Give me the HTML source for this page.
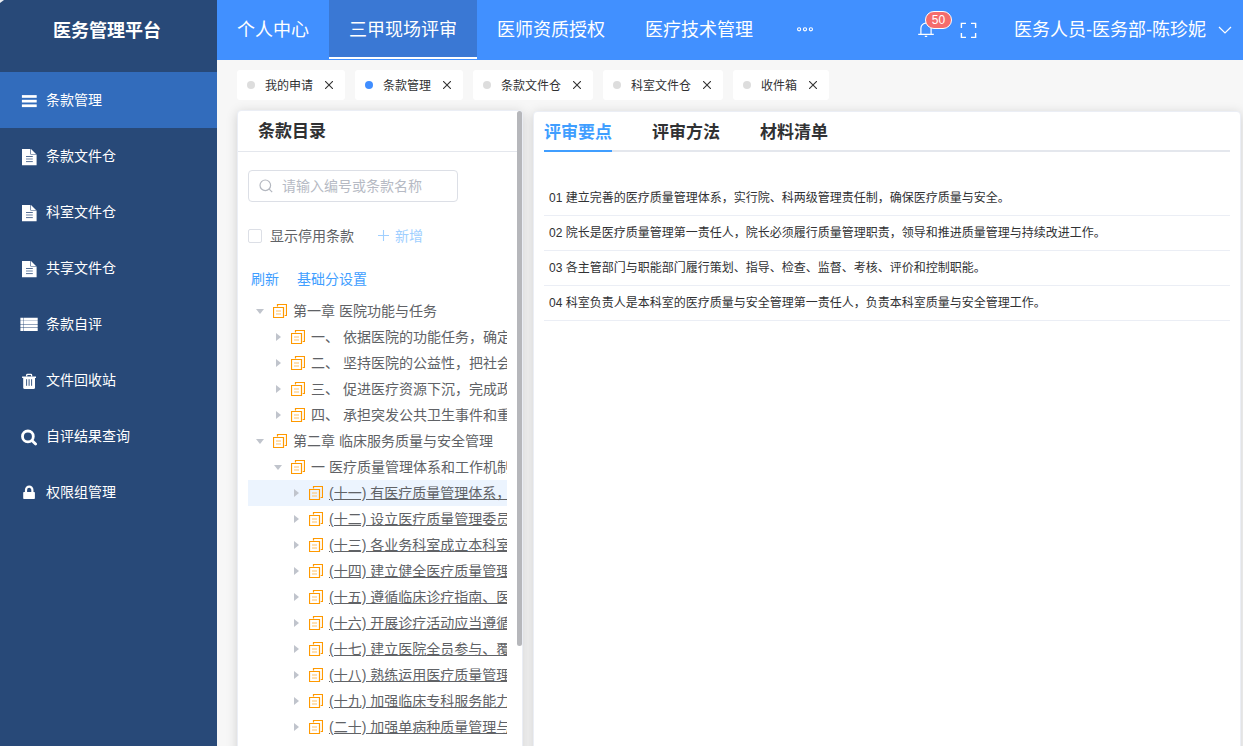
<!DOCTYPE html>
<html lang="zh-CN">
<head>
<meta charset="utf-8">
<title>医务管理平台</title>
<style>
*{box-sizing:border-box;margin:0;padding:0}
html,body{width:1243px;height:746px;overflow:hidden;background:#f7f7f7;
  font-family:"Liberation Sans","Noto Sans CJK SC",sans-serif;color:#303133;}
body{position:relative}
svg{display:block}

/* ---------- sidebar ---------- */
#side{position:absolute;left:0;top:0;width:217px;height:746px;background:#284978;color:#fff}
#logo{position:absolute;left:0;top:2px;width:214px;height:60px;line-height:59px;text-align:center;
  font-size:18px;font-weight:700;letter-spacing:0}
#menu{position:absolute;left:0;top:72px;width:217px;list-style:none}
#menu li{position:relative;height:56px;line-height:56px;font-size:14px;padding-left:46px;white-space:nowrap}
#menu li.on{background:#326cbc}
#menu li svg{position:absolute;left:20px;top:20px;width:18px;height:18px;fill:#fff}

/* ---------- top bar ---------- */
#top{position:absolute;left:217px;top:0;width:1026px;height:60px;background:#4190ff;color:#fff}
#nav{position:absolute;left:0;top:0;height:59px;list-style:none;display:flex}
#nav li{height:59px;line-height:60px;padding:0 20px;font-size:18px;white-space:nowrap;position:relative}
#nav li.on{background:#3a78d4}
#nav li.on:after{content:"";position:absolute;left:0;right:0;bottom:0;height:2px;background:#fff}
#user{position:absolute;left:797px;top:0;height:60px;line-height:60px;font-size:18px;white-space:nowrap}
.abs{position:absolute}

/* ---------- tags ---------- */
#tags{position:absolute;left:237px;top:70px;height:30px;display:flex;list-style:none}
#tags li{position:relative;height:30px;line-height:32px;background:#fff;border-radius:3px;margin-right:10px;
  font-size:12px;color:#303133;padding:0 32px 0 28px;white-space:nowrap}
#tags li:before{content:"";position:absolute;left:10px;top:11px;width:8px;height:8px;border-radius:50%;background:#ddd}
#tags li.on:before{background:#408eff}
#tags li svg{position:absolute;right:12px;top:11px;width:8px;height:8px;stroke:#333;stroke-width:1.1;fill:none}

/* ---------- left card ---------- */
.card{position:absolute;background:#fff;border:1px solid #ebeef5;border-radius:4px;
  box-shadow:0 2px 12px 0 rgba(0,0,0,.16)}
#lcard{left:237px;top:110px;width:286px;height:660px}
#lhead{position:absolute;left:0;top:0;width:279px;height:41px;border-bottom:1px solid #e4e7ed;
  font-size:17px;font-weight:700;line-height:41px;padding-left:20px;color:#303133}
#thumb{position:absolute;left:279px;top:0;width:5px;height:535px;background:#b6b7bb;border-radius:3px}
#search{position:absolute;left:10px;top:59px;width:210px;height:32px;border:1px solid #dcdfe6;border-radius:4px;
  font-size:14px;line-height:30px;color:#b6bac4;padding-left:33px;white-space:nowrap}
#search svg{position:absolute;left:10px;top:8px;width:14px;height:14px;stroke:#b4b8c0;fill:none;stroke-width:1.2}
#chk{position:absolute;left:10px;top:118px;width:14px;height:14px;border:1px solid #dcdfe6;border-radius:2px;background:#fff}
#chklab{position:absolute;left:32px;top:114px;font-size:14px;line-height:22px;color:#606266;white-space:nowrap}
#add{position:absolute;left:139px;top:114px;font-size:14px;line-height:22px;color:#a0cfff;white-space:nowrap;padding-left:18px}
#add svg{position:absolute;left:1px;top:5px;width:11px;height:11px;stroke:#a0cfff;stroke-width:1.1;fill:none}
#links{position:absolute;left:13px;top:157px;font-size:14px;line-height:22px;color:#409eff;white-space:nowrap}
#links span{margin-right:18px}
#tree{position:absolute;left:10px;top:187px;width:259px;overflow:hidden;list-style:none}
#tree li{position:relative;height:26px;line-height:26px;font-size:14px;color:#606266;white-space:nowrap;overflow:hidden}
#tree li.cur{background:#ecf4fe}
#tree li u{text-decoration:underline;text-underline-offset:1px}
#tree li .ar{position:absolute;top:8px;width:10px;height:10px;fill:#c0c4cc}
#tree li .ic{position:absolute;top:6px;width:14px;height:14px;stroke:#ff9900;fill:none;stroke-width:1.2}
#tree li .ic .in{stroke:#ffc266;stroke-width:1.2}
.l1{padding-left:45px}.l1 .ar{left:7px}.l1 .ic{left:25px}
.l2{padding-left:63px}.l2 .ar{left:25px}.l2 .ic{left:43px}
.l3{padding-left:81px}.l3 .ar{left:43px}.l3 .ic{left:61px}

/* ---------- right card ---------- */
#rcard{left:533px;top:111px;width:708px;height:660px}
#rtabs{position:absolute;left:10px;top:0;width:686px;height:40px;border-bottom:2px solid #e4e7ed;list-style:none;display:flex}
#rtabs li{height:38px;line-height:42px;font-size:17px;font-weight:700;color:#303133;margin-right:40px;position:relative;white-space:nowrap}
#rtabs li.on{color:#409eff}
#rtabs li.on:after{content:"";position:absolute;left:0;right:0;bottom:-2px;height:2px;background:#409eff}
#rlist{position:absolute;left:10px;top:69px;width:686px;list-style:none}
#rlist li{height:35px;line-height:34px;border-bottom:1px solid #ebeef5;font-size:12px;color:#303133;padding-left:5px;white-space:nowrap}
</style>
</head>
<body>

<div id="side">
  <div style="position:absolute;left:0;top:0;width:0;height:0;border-top:3px solid #fff;border-right:4px solid transparent;opacity:.9"></div>
  <div id="logo">医务管理平台</div>
  <ul id="menu">
    <li class="on"><svg viewBox="0 0 18 18"><rect x="1.900" y="3.100" width="14.800" height="2.700"/><rect x="1.900" y="7.800" width="14.800" height="2.700"/><rect x="1.900" y="12.400" width="14.800" height="2.700"/></svg>条款管理</li>
    <li><svg viewBox="0 0 18 18"><path d="M2 1h8.400v5.600h6.200v10.700H2z"/><path d="M11 1l5 5h-5z"/><path d="M6 8.500h6.800M6 13.600h6.800" stroke="#284978" stroke-width=".8"/><path d="M6 11h6.800" stroke="#284978" stroke-opacity=".45" stroke-width="1.500"/></svg>条款文件仓</li>
    <li><svg viewBox="0 0 18 18"><path d="M2 1h8.400v5.600h6.200v10.700H2z"/><path d="M11 1l5 5h-5z"/><path d="M6 8.500h6.800M6 13.600h6.800" stroke="#284978" stroke-width=".8"/><path d="M6 11h6.800" stroke="#284978" stroke-opacity=".45" stroke-width="1.500"/></svg>科室文件仓</li>
    <li><svg viewBox="0 0 18 18"><path d="M2 1h8.400v5.600h6.200v10.700H2z"/><path d="M11 1l5 5h-5z"/><path d="M6 8.500h6.800M6 13.600h6.800" stroke="#284978" stroke-width=".8"/><path d="M6 11h6.800" stroke="#284978" stroke-opacity=".45" stroke-width="1.500"/></svg>共享文件仓</li>
    <li><svg viewBox="0 0 18 18"><path d="M.4 1.700h3v3h-3zM3.800 1.700h13.900v3H3.800zM.4 5.100h3v3h-3zM3.800 5.100h13.900v3H3.800zM.4 8.500h3v3h-3zM3.800 8.500h13.900v3H3.800zM.4 11.900h3V15h-3zM3.800 11.900h13.900V15H3.800z"/></svg>条款自评</li>
    <li><svg viewBox="0 0 18 18"><path d="M2.100 4.500H16V6H2.100z"/><path d="M6.700 4.600V3.200a.8.800 0 0 1 .8-.8h3.300a.8.800 0 0 1 .8.800v1.400" fill="none" stroke="#fff" stroke-width="1.300"/><path d="M3.200 6H15v9.400a1.500 1.500 0 0 1-1.500 1.500H4.700a1.500 1.500 0 0 1-1.500-1.500z"/><path d="M6.600 7.200v6.600M9.100 7.200v6.600M11.600 7.200v6.600" stroke="#284978" stroke-width=".9"/></svg>文件回收站</li>
    <li><svg viewBox="0 0 18 18"><circle cx="7.900" cy="8.400" r="5.400" fill="none" stroke="#fff" stroke-width="2.800"/><path d="M11.900 12.400l3.700 3.700" stroke="#fff" stroke-width="2.800" stroke-linecap="round"/></svg>自评结果查询</li>
    <li><svg viewBox="0 0 18 18"><rect x="3.200" y="7.900" width="11.700" height="7.100" rx=".8"/><path d="M6 8.500V5.900a3.200 3.200 0 0 1 6.400 0v2.600" fill="none" stroke="#fff" stroke-width="2.200"/></svg>权限组管理</li>
  </ul>
</div>

<div id="top">
  <ul id="nav">
    <li>个人中心</li><li class="on">三甲现场评审</li><li>医师资质授权</li><li>医疗技术管理</li>
    <li><svg style="margin-top:25px" width="24" height="9" viewBox="0 0 24 9" fill="none" stroke="#fff" stroke-width="1.100"><circle cx="6.100" cy="4.300" r="1.600"/><circle cx="12" cy="4.300" r="1.600"/><circle cx="17.900" cy="4.300" r="1.600"/></svg></li>
  </ul>
  <svg class="abs" style="left:700px;top:21px" width="18" height="17" viewBox="0 0 18 17" fill="none" stroke="#fff" stroke-width="1.200"><path d="M3.900 12.700V7.300a5.100 5.100 0 0 1 10.200 0v5.400M1.200 13.300h15.600M9 1.200v1M7.800 15.300h2.400"/></svg>
  <div class="abs" style="left:708px;top:11px;width:27px;height:18px;border-radius:10px;background:#f56c6c;border:1px solid #fff;color:#fff;font-size:12px;line-height:16px;text-align:center">50</div>
  <svg class="abs" style="left:743px;top:22px" width="18" height="18" viewBox="0 0 18 18" fill="none" stroke="#fff" stroke-width="1.400"><path d="M1.400 6V1.400H6M11 1.400h4.600V6M15.600 11v4.400H11M6 15.400H1.400V11"/></svg>
  <div id="user">医务人员-医务部-陈珍妮</div>
  <svg class="abs" style="left:1001px;top:26px" width="14" height="9" viewBox="0 0 14 9" fill="none" stroke="#fff" stroke-width="1.200"><path d="M1 1l6 6 6-6"/></svg>
</div>

<ul id="tags">
  <li>我的申请<svg viewBox="0 0 8 8"><path d="M0 0l8 8M8 0L0 8"/></svg></li>
  <li class="on">条款管理<svg viewBox="0 0 8 8"><path d="M0 0l8 8M8 0L0 8"/></svg></li>
  <li>条款文件仓<svg viewBox="0 0 8 8"><path d="M0 0l8 8M8 0L0 8"/></svg></li>
  <li>科室文件仓<svg viewBox="0 0 8 8"><path d="M0 0l8 8M8 0L0 8"/></svg></li>
  <li>收件箱<svg viewBox="0 0 8 8"><path d="M0 0l8 8M8 0L0 8"/></svg></li>
</ul>

<div class="card" id="lcard">
  <div id="lhead">条款目录</div>
  <div id="thumb"></div>
  <div id="search"><svg viewBox="0 0 14 14"><circle cx="6.300" cy="6.300" r="5.300"/><path d="M10.200 10.200l3 3"/></svg>请输入编号或条款名称</div>
  <div id="chk"></div><div id="chklab">显示停用条款</div>
  <div id="add"><svg viewBox="0 0 11 11"><path d="M5.500 0v11M0 5.500h11"/></svg>新增</div>
  <div id="links"><span>刷新</span><span>基础分设置</span></div>
  <ul id="tree">
    <li class="l1"><svg class="ar" viewBox="0 0 10 10"><path d="M1 3h8L5 8z"/></svg><svg class="ic" viewBox="0 0 14 14"><path d="M.5 3.500h10v10H.5zM4.500 2.500V.5h9v11h-1.800"/><path class="in" d="M3 7h5M3 10h5"/></svg>第一章 医院功能与任务</li>
    <li class="l2"><svg class="ar" viewBox="0 0 10 10"><path d="M3 1v8l5-4z"/></svg><svg class="ic" viewBox="0 0 14 14"><path d="M.5 3.500h10v10H.5zM4.500 2.500V.5h9v11h-1.800"/><path class="in" d="M3 7h5M3 10h5"/></svg>一、 依据医院的功能任务，确定医院的发展目标</li>
    <li class="l2"><svg class="ar" viewBox="0 0 10 10"><path d="M3 1v8l5-4z"/></svg><svg class="ic" viewBox="0 0 14 14"><path d="M.5 3.500h10v10H.5zM4.500 2.500V.5h9v11h-1.800"/><path class="in" d="M3 7h5M3 10h5"/></svg>二、 坚持医院的公益性，把社会效益放在首位</li>
    <li class="l2"><svg class="ar" viewBox="0 0 10 10"><path d="M3 1v8l5-4z"/></svg><svg class="ic" viewBox="0 0 14 14"><path d="M.5 3.500h10v10H.5zM4.500 2.500V.5h9v11h-1.800"/><path class="in" d="M3 7h5M3 10h5"/></svg>三、 促进医疗资源下沉，完成政府指令性任务</li>
    <li class="l2"><svg class="ar" viewBox="0 0 10 10"><path d="M3 1v8l5-4z"/></svg><svg class="ic" viewBox="0 0 14 14"><path d="M.5 3.500h10v10H.5zM4.500 2.500V.5h9v11h-1.800"/><path class="in" d="M3 7h5M3 10h5"/></svg>四、 承担突发公共卫生事件和重大事故灾害</li>
    <li class="l1"><svg class="ar" viewBox="0 0 10 10"><path d="M1 3h8L5 8z"/></svg><svg class="ic" viewBox="0 0 14 14"><path d="M.5 3.500h10v10H.5zM4.500 2.500V.5h9v11h-1.800"/><path class="in" d="M3 7h5M3 10h5"/></svg>第二章 临床服务质量与安全管理</li>
    <li class="l2"><svg class="ar" viewBox="0 0 10 10"><path d="M1 3h8L5 8z"/></svg><svg class="ic" viewBox="0 0 14 14"><path d="M.5 3.500h10v10H.5zM4.500 2.500V.5h9v11h-1.800"/><path class="in" d="M3 7h5M3 10h5"/></svg>一 医疗质量管理体系和工作机制</li>
    <li class="l3 cur"><svg class="ar" viewBox="0 0 10 10"><path d="M3 1v8l5-4z"/></svg><svg class="ic" viewBox="0 0 14 14"><path d="M.5 3.500h10v10H.5zM4.500 2.500V.5h9v11h-1.800"/><path class="in" d="M3 7h5M3 10h5"/></svg><u>(十一) 有医疗质量管理体系，实行院科两级</u></li>
    <li class="l3"><svg class="ar" viewBox="0 0 10 10"><path d="M3 1v8l5-4z"/></svg><svg class="ic" viewBox="0 0 14 14"><path d="M.5 3.500h10v10H.5zM4.500 2.500V.5h9v11h-1.800"/><path class="in" d="M3 7h5M3 10h5"/></svg><u>(十二) 设立医疗质量管理委员会，人员组成</u></li>
    <li class="l3"><svg class="ar" viewBox="0 0 10 10"><path d="M3 1v8l5-4z"/></svg><svg class="ic" viewBox="0 0 14 14"><path d="M.5 3.500h10v10H.5zM4.500 2.500V.5h9v11h-1.800"/><path class="in" d="M3 7h5M3 10h5"/></svg><u>(十三) 各业务科室成立本科室医疗质量管理</u></li>
    <li class="l3"><svg class="ar" viewBox="0 0 10 10"><path d="M3 1v8l5-4z"/></svg><svg class="ic" viewBox="0 0 14 14"><path d="M.5 3.500h10v10H.5zM4.500 2.500V.5h9v11h-1.800"/><path class="in" d="M3 7h5M3 10h5"/></svg><u>(十四) 建立健全医疗质量管理人员的培训</u></li>
    <li class="l3"><svg class="ar" viewBox="0 0 10 10"><path d="M3 1v8l5-4z"/></svg><svg class="ic" viewBox="0 0 14 14"><path d="M.5 3.500h10v10H.5zM4.500 2.500V.5h9v11h-1.800"/><path class="in" d="M3 7h5M3 10h5"/></svg><u>(十五) 遵循临床诊疗指南、医疗技术操作规范</u></li>
    <li class="l3"><svg class="ar" viewBox="0 0 10 10"><path d="M3 1v8l5-4z"/></svg><svg class="ic" viewBox="0 0 14 14"><path d="M.5 3.500h10v10H.5zM4.500 2.500V.5h9v11h-1.800"/><path class="in" d="M3 7h5M3 10h5"/></svg><u>(十六) 开展诊疗活动应当遵循患者知情同意</u></li>
    <li class="l3"><svg class="ar" viewBox="0 0 10 10"><path d="M3 1v8l5-4z"/></svg><svg class="ic" viewBox="0 0 14 14"><path d="M.5 3.500h10v10H.5zM4.500 2.500V.5h9v11h-1.800"/><path class="in" d="M3 7h5M3 10h5"/></svg><u>(十七) 建立医院全员参与、覆盖临床诊疗</u></li>
    <li class="l3"><svg class="ar" viewBox="0 0 10 10"><path d="M3 1v8l5-4z"/></svg><svg class="ic" viewBox="0 0 14 14"><path d="M.5 3.500h10v10H.5zM4.500 2.500V.5h9v11h-1.800"/><path class="in" d="M3 7h5M3 10h5"/></svg><u>(十八) 熟练运用医疗质量管理工具开展</u></li>
    <li class="l3"><svg class="ar" viewBox="0 0 10 10"><path d="M3 1v8l5-4z"/></svg><svg class="ic" viewBox="0 0 14 14"><path d="M.5 3.500h10v10H.5zM4.500 2.500V.5h9v11h-1.800"/><path class="in" d="M3 7h5M3 10h5"/></svg><u>(十九) 加强临床专科服务能力建设</u></li>
    <li class="l3"><svg class="ar" viewBox="0 0 10 10"><path d="M3 1v8l5-4z"/></svg><svg class="ic" viewBox="0 0 14 14"><path d="M.5 3.500h10v10H.5zM4.500 2.500V.5h9v11h-1.800"/><path class="in" d="M3 7h5M3 10h5"/></svg><u>(二十) 加强单病种质量管理与控制工作</u></li>
  </ul>
</div>

<div class="card" id="rcard">
  <ul id="rtabs"><li class="on">评审要点</li><li>评审方法</li><li>材料清单</li></ul>
  <ul id="rlist">
    <li>01 建立完善的医疗质量管理体系，实行院、科两级管理责任制，确保医疗质量与安全。</li>
    <li>02 院长是医疗质量管理第一责任人，院长必须履行质量管理职责，领导和推进质量管理与持续改进工作。</li>
    <li>03 各主管部门与职能部门履行策划、指导、检查、监督、考核、评价和控制职能。</li>
    <li>04 科室负责人是本科室的医疗质量与安全管理第一责任人，负责本科室质量与安全管理工作。</li>
  </ul>
</div>

</body>
</html>
